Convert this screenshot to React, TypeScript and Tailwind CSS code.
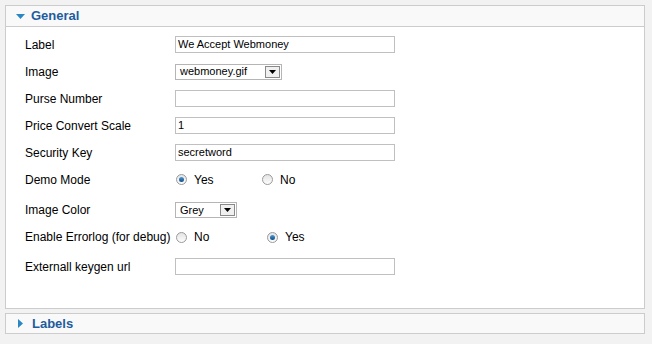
import React from 'react'

const font = { fontFamily: '"Liberation Sans", Arial, sans-serif' }

function TextInput({ value = '' }: { value?: string }) {
  return (
    <div className="flex h-[17px] w-[220px] items-center border border-[#c0c0c0] bg-white pl-[2px] text-[11px] text-black">
      {value}
    </div>
  )
}

function Select({ value, width }: { value: string; width: string }) {
  return (
    <div className={`flex h-[16px] ${width} items-center justify-between border border-[#b5b5b5] bg-white pl-[4px] pr-[1px] text-[11px] text-black`}>
      <span>{value}</span>
      <span className="flex h-[12px] w-[15px] items-center justify-center border border-[#8a8a8a] bg-[#f0f0f0]">
        <svg width="7" height="4" viewBox="0 0 7 4">
          <path d="M0 0h7L3.5 4z" fill="#000" />
        </svg>
      </span>
    </div>
  )
}

function Radio({ checked }: { checked?: boolean }) {
  return (
    <span className="inline-flex h-[11px] w-[11px] items-center justify-center rounded-full border border-[#9a9a9a] bg-gradient-to-b from-[#e4e4e4] to-[#fdfdfd]">
      {checked && <span className="h-[5px] w-[5px] rounded-full bg-gradient-to-b from-[#4a9ad8] to-[#0b4d86]" />}
    </span>
  )
}

function RadioPair({ first, second, firstChecked, secondX }: { first: string; second: string; firstChecked: boolean; secondX: string }) {
  return (
    <div className="flex items-center text-[12px] text-black">
      <div className="flex w-[87px] items-center gap-[7px] pl-[1px]">
        <Radio checked={firstChecked} />
        <span>{first}</span>
      </div>
      <div className={`flex items-center gap-[7px] ${secondX}`}>
        <Radio checked={!firstChecked} />
        <span>{second}</span>
      </div>
    </div>
  )
}

function Row({ label, h, children }: { label: string; h: string; children: React.ReactNode }) {
  return (
    <div className={`flex ${h} items-center`}>
      <div className="w-[169px] shrink-0 whitespace-nowrap pl-[19px] text-[12px] text-black">{label}</div>
      <div>{children}</div>
    </div>
  )
}

export default function App() {
  return (
    <div className="h-[344px] w-[652px] bg-[#f2f2f2] pl-[5px] pt-[5px]" style={font}>
      {/* General panel */}
      <div className="w-[640px] border border-[#cccccc] bg-white">
        <div className="flex h-[21px] items-center border-b border-[#cccccc] bg-[#f9f9f9] pl-[10px]">
          <svg width="9" height="5" viewBox="0 0 9 5" className="mr-[6px]">
            <path d="M0 0h9L4.5 5z" fill="#2a87c4" />
          </svg>
          <span className="text-[13px] font-bold text-[#1d5c9e]">General</span>
        </div>
        <div className="h-[281px] pt-[4px]">
          <Row label="Label" h="h-[27px]">
            <TextInput value="We Accept Webmoney" />
          </Row>
          <Row label="Image" h="h-[27px]">
            <Select value="webmoney.gif" width="w-[107px]" />
          </Row>
          <Row label="Purse Number" h="h-[27px]">
            <TextInput />
          </Row>
          <Row label="Price Convert Scale" h="h-[27px]">
            <TextInput value="1" />
          </Row>
          <Row label="Security Key" h="h-[27px]">
            <TextInput value="secretword" />
          </Row>
          <Row label="Demo Mode" h="h-[27px]">
            <RadioPair first="Yes" second="No" firstChecked secondX="" />
          </Row>
          <Row label="Image Color" h="h-[34px]">
            <Select value="Grey" width="w-[62px]" />
          </Row>
          <Row label="Enable Errorlog (for debug)" h="h-[20px]">
            <RadioPair first="No" second="Yes" firstChecked={false} secondX="pl-[5px]" />
          </Row>
          <Row label="Externall keygen url" h="h-[39px]">
            <TextInput />
          </Row>
        </div>
      </div>

      {/* Labels panel */}
      <div className="mt-[4px] flex h-[21px] w-[640px] items-center border border-[#cccccc] bg-[#f9f9f9] pl-[12px]">
        <svg width="5" height="9" viewBox="0 0 5 9" className="mr-[9px]">
          <path d="M0 0v9L5 4.5z" fill="#2a87c4" />
        </svg>
        <span className="text-[13px] font-bold text-[#1d5c9e]">Labels</span>
      </div>
    </div>
  )
}
